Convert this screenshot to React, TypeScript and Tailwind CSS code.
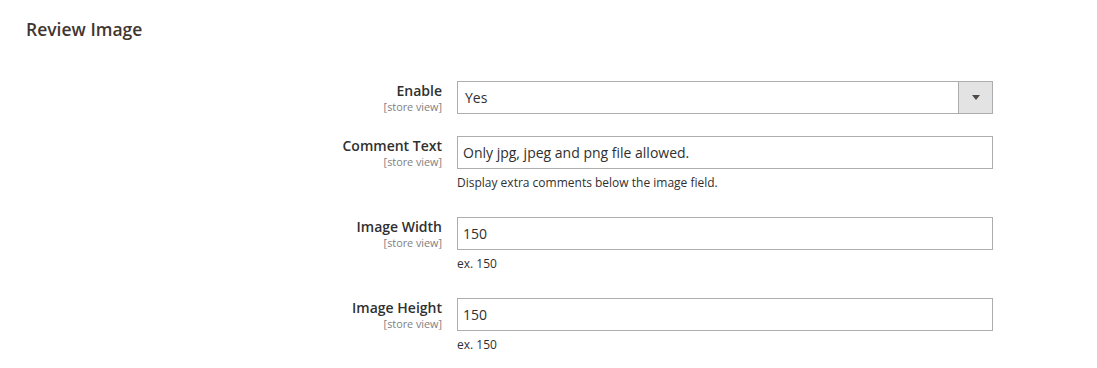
import { ReactNode } from 'react';

interface FieldProps {
  label: string;
  note?: string;
  children: ReactNode;
  className?: string;
}

function Field({ label, note, children, className }: FieldProps) {
  return (
    <div className={`flex items-start ${className ?? ''}`}>
      <div className="w-[442px] shrink-0 pt-[1px] text-right">
        <div className="text-[14px] font-semibold leading-[18px] text-[#303030]">{label}</div>
        <div className="text-[10.8px] leading-[13px] text-[#808080]">[store view]</div>
      </div>
      <div className="ml-[15px] w-[536px]">
        {children}
        {note && <div className="mt-[5px] text-[12px] leading-[18px] text-[#303030]">{note}</div>}
      </div>
    </div>
  );
}

function TextInput({ value }: { value: string }) {
  return (
    <div className="flex h-[33px] items-center border border-[#adadad] bg-white px-[5px] text-[14px] text-[#303030]">
      {value}
    </div>
  );
}

export default function App() {
  return (
    <div className="min-h-[368px] w-[1097px] bg-white font-['Open_Sans',sans-serif]">
      <h2 className="pl-[26px] pt-[19px] text-[17.5px] font-semibold leading-[20px] text-[#41362f]">
        Review Image
      </h2>

      <div className="mt-[42px]">
        <Field label="Enable" className="mb-[22px]">
          <div className="flex h-[33px] items-stretch border border-[#adadad] bg-white text-[14px] text-[#303030]">
            <div className="flex flex-1 items-center px-[7px]">Yes</div>
            <div className="flex w-[34px] items-center justify-center border-l border-[#adadad] bg-[#e3e3e3]">
              <div className="h-0 w-0 border-x-[4px] border-t-[5px] border-x-transparent border-t-[#514943]" />
            </div>
          </div>
        </Field>

        <Field
          label="Comment Text"
          note="Display extra comments below the image field."
          className="mb-[25px]"
        >
          <TextInput value="Only jpg, jpeg and png file allowed." />
        </Field>

        <Field label="Image Width" note="ex. 150" className="mb-[25px]">
          <TextInput value="150" />
        </Field>

        <Field label="Image Height" note="ex. 150">
          <TextInput value="150" />
        </Field>
      </div>
    </div>
  );
}
